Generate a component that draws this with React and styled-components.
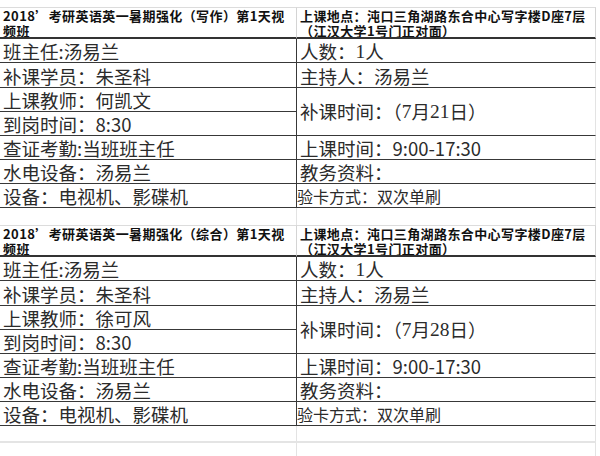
import styled, { createGlobalStyle } from "styled-components";

const GlobalStyle = createGlobalStyle`
  html, body {
    margin: 0;
    padding: 0;
    background: #fff;
  }
  body {
    font-family: "Noto Sans CJK SC", "Noto Sans", sans-serif;
  }
`;

const Sheet = styled.div`
  width: 600px;
  height: 456px;
  overflow: hidden;
  box-sizing: border-box;
  padding-top: 7px;
  display: flex;
  flex-direction: column;
`;

const Table = styled.div`
  display: grid;
  grid-template-columns: 297px 299px;
  grid-template-rows: 32px 24px 25px 24px 24px 24px 24px 24px;
  grid-auto-flow: column;
`;

const HeadCell = styled.div`
  box-sizing: border-box;
  padding: 0 0 0 3px;
  border-top: 1px solid #dcdcdc;
  border-bottom: 2px solid #333;
  border-right: 1px solid #d4d4d4;
  font-size: 13px;
  font-weight: 700;
  letter-spacing: 0.4px;
  line-height: 15px;
  color: #111;
  white-space: nowrap;
  overflow: hidden;
`;

const Cell = styled.div`
  box-sizing: border-box;
  display: flex;
  align-items: ${(p) => (p.$span ? "center" : "flex-end")};
  grid-row: ${(p) => (p.$span ? `span ${p.$span}` : "auto")};
  padding-left: ${(p) => (p.$small ? 0 : 3)}px;
  border-bottom: 1px solid #383838;
  border-right: 1px solid ${(p) => (p.$left ? "#383838" : "#e3e3e3")};
  font-size: ${(p) => (p.$small ? 16 : 18.5)}px;
  line-height: 21px;
  color: #2b2b2b;
  white-space: nowrap;
  overflow: hidden;
`;

const Serif = styled.span`
  font-family: "Liberation Serif", serif;
  font-size: 1.05em;
`;

const BlankRow = styled.div`
  display: grid;
  grid-template-columns: 297px 299px;
  height: ${(p) => p.$h}px;
  box-sizing: border-box;
  border-bottom: ${(p) => (p.$line ? "2px solid #e4e4e4" : "none")};
  width: 596px;
`;

const BlankCell = styled.div`
  border-right: 1px solid #e3e3e3;
`;

const lessons = [
  {
    title: "2018’考研英语英一暑期强化（写作）第1天视",
    teacher: "何凯文",
    date: "21",
  },
  {
    title: "2018’考研英语英一暑期强化（综合）第1天视",
    teacher: "徐可风",
    date: "28",
  },
];

function LessonTable({ lesson }) {
  const left = [
    "班主任:汤易兰",
    "补课学员：朱圣科",
    `上课教师：${lesson.teacher}`,
    "到岗时间：8:30",
    "查证考勤:当班班主任",
    "水电设备：汤易兰",
    "设备：电视机、影碟机",
  ];

  return (
    <Table>
      <HeadCell>
        {lesson.title}
        <br />
        频班
      </HeadCell>
      {left.map((text) => (
        <Cell key={text} $left>
          {text}
        </Cell>
      ))}

      <HeadCell>
        上课地点：沌口三角湖路东合中心写字楼D座7层
        <br />
        （江汉大学1号门正对面）
      </HeadCell>
      <Cell>
        人数：<Serif>1</Serif>人
      </Cell>
      <Cell>主持人：汤易兰</Cell>
      <Cell $span={2}>
        补课时间：（<Serif>7</Serif>月<Serif>{lesson.date}</Serif>日）
      </Cell>
      <Cell>上课时间：9:00-17:30</Cell>
      <Cell>教务资料：</Cell>
      <Cell $small>验卡方式：双次单刷</Cell>
    </Table>
  );
}

export default function App() {
  return (
    <>
      <GlobalStyle />
      <Sheet>
        <LessonTable lesson={lessons[0]} />
        <BlankRow $h={18}>
          <BlankCell />
          <BlankCell />
        </BlankRow>
        <LessonTable lesson={lessons[1]} />
        <BlankRow $h={17} $line>
          <BlankCell />
          <BlankCell />
        </BlankRow>
        <BlankRow $h={14}>
          <BlankCell />
          <BlankCell />
        </BlankRow>
      </Sheet>
    </>
  );
}
